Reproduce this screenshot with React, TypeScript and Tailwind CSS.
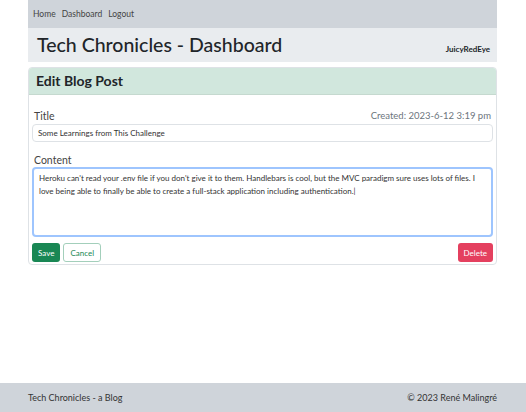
const font = { fontFamily: 'Lato, "Open Sans", sans-serif' };

const App = () => {
  return (
    <div className="min-h-[412px] flex flex-col bg-white text-[#212529]" style={font}>
      <div className="w-[469px] ml-[28px]">
        {/* nav */}
        <nav className="h-[28px] bg-[#cfd4da] flex items-center gap-[6px] px-[5px] text-[8.5px] text-[#444]">
          <a>Home</a>
          <a>Dashboard</a>
          <a>Logout</a>
        </nav>

        {/* header */}
        <header className="h-[34px] bg-[#e9ecef] flex items-center justify-between pl-[9px] pr-[7px]">
          <h1 className="text-[19.5px] font-medium leading-none">Tech Chronicles - Dashboard</h1>
          <span className="text-[8px] font-bold mt-[8px]">JuicyRedEye</span>
        </header>

        {/* card */}
        <div className="mt-[5px] border border-[#dee2e6] rounded-[4px] bg-white">
          <div className="h-[27px] bg-[#d1e7dd] border-b border-[#c5d9cf] flex items-center px-[7px] rounded-t-[3px]">
            <h2 className="text-[14px] font-bold leading-none">Edit Blog Post</h2>
          </div>
          <div className="px-[3px] pt-[14px] pb-[2px]">
            <div className="flex justify-between items-end px-[2px] text-[10.5px] text-[#444] leading-[14px]">
              <label>Title</label>
              <span className="text-[#6c757d] text-[9.5px]">Created: 2023-6-12 3:19 pm</span>
            </div>
            <div className="mt-[1px] h-[18px] border border-[#dee2e6] rounded-[4px] flex items-center px-[5px] text-[8px] text-[#333]">
              Some Learnings from This Challenge
            </div>
            <label className="block mt-[11px] px-[2px] text-[10.5px] leading-[14px] text-[#444]">Content</label>
            <div className="h-[70px] border-2 border-[#9ec5fe] rounded-[4px] px-[5px] py-[3px] text-[8px] leading-[13px] text-[#333]">
              Heroku can't read your .env file if you don't give it to them. Handlebars is cool, but the MVC paradigm sure uses lots of files. I love being able to finally be able to create a full-stack application including authentication.|
            </div>
            <div className="mt-[6px] flex items-center">
              <button className="h-[19px] px-[6px] rounded-[3px] bg-[#198754] text-white text-[8px]">Save</button>
              <button className="ml-[3px] h-[19px] px-[6px] rounded-[3px] border border-[#a3cfbb] text-[#198754] text-[8px]">Cancel</button>
              <button className="ml-auto h-[19px] px-[6px] rounded-[3px] bg-[#e4405f] text-white text-[8px]">Delete</button>
            </div>
          </div>
        </div>
      </div>

      <footer className="mt-auto h-[29px] bg-[#cfd4da] flex items-center justify-between pl-[28px] pr-[29px] text-[9px] text-[#333]">
        <span>Tech Chronicles - a Blog</span>
        <span>© 2023 René Malingré</span>
      </footer>
    </div>
  );
};

export default App;
